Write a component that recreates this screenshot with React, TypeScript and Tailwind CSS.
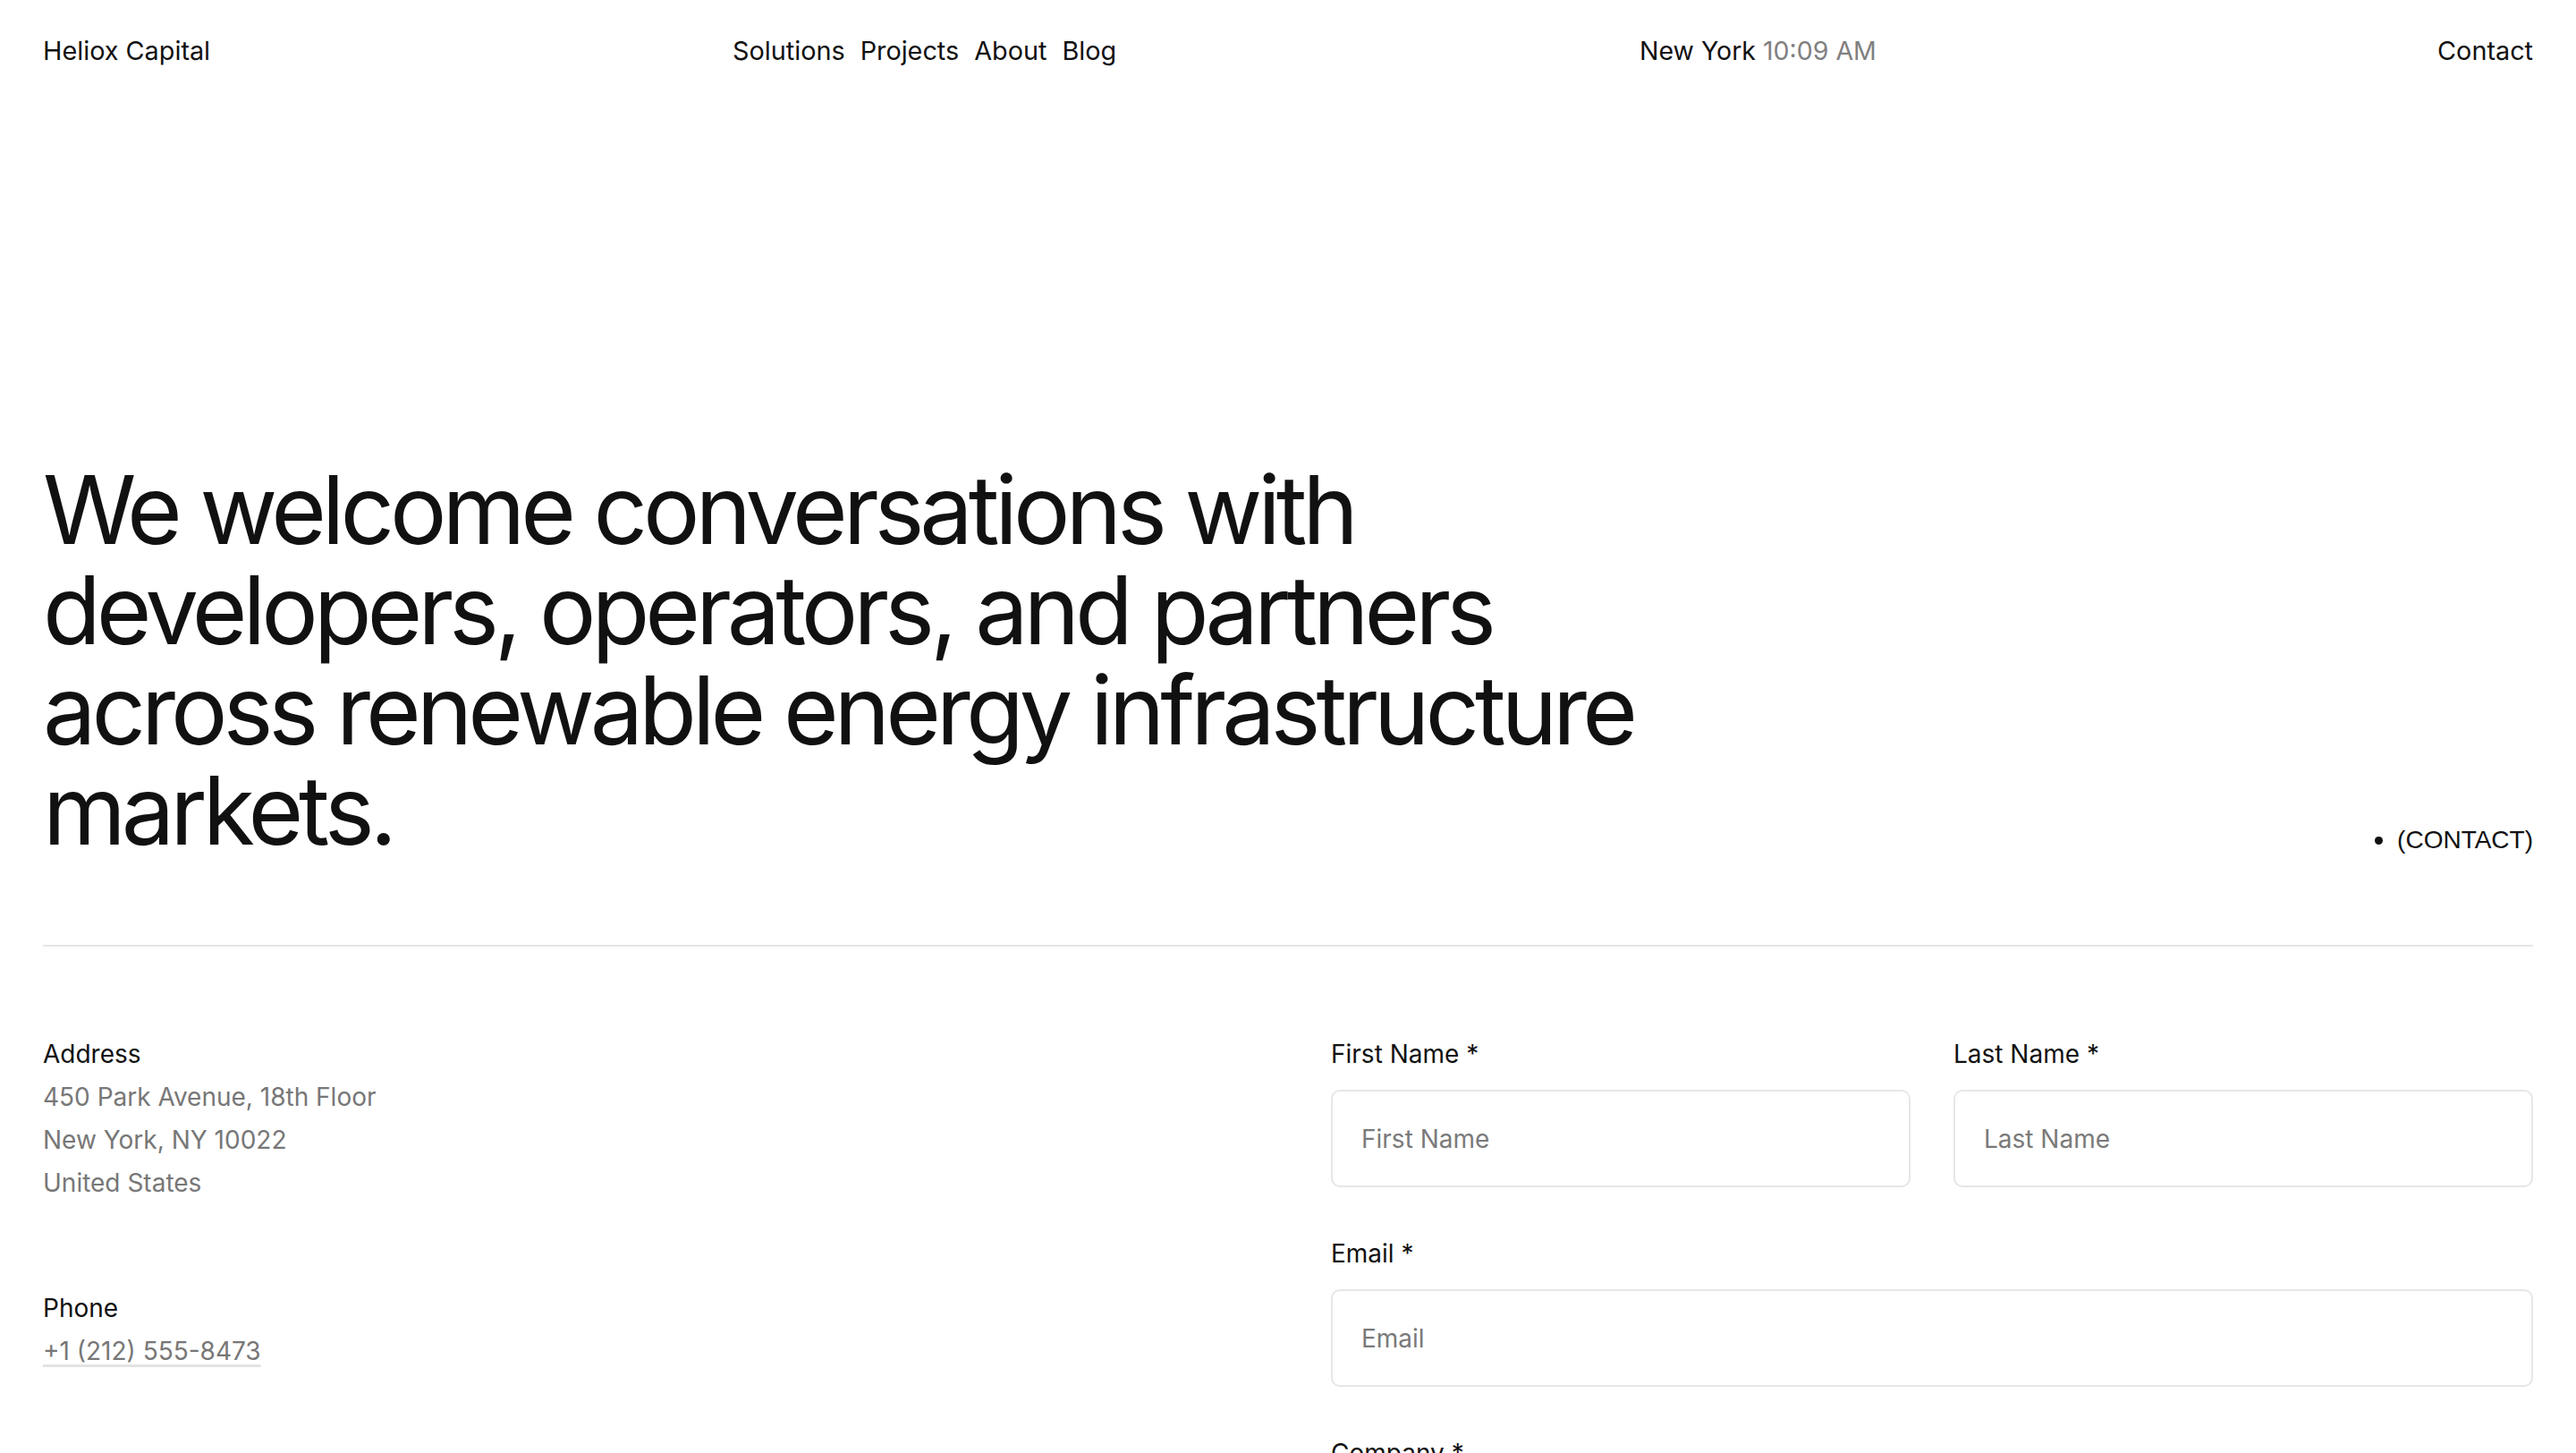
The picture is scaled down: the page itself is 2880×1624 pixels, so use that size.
import { useState } from 'react'

const navLinks = ['Solutions', 'Projects', 'About', 'Blog']

function Field({ label, placeholder, type = 'text' }: { label: string; placeholder: string; type?: string }) {
  const [value, setValue] = useState('')
  return (
    <label className="flex flex-col gap-4">
      <span className="text-[28px] leading-[48px] text-[#111]">{label}</span>
      <input
        type={type}
        value={value}
        onChange={(e) => setValue(e.target.value)}
        placeholder={placeholder}
        className="h-[109px] w-full rounded-[10px] border-2 border-[#e6e6e6] bg-white px-8 text-[28px] text-[#111] placeholder-[#7a7a7a] outline-none focus:border-[#bdbdbd]"
      />
    </label>
  )
}

export default function App() {
  return (
    <div className="min-h-screen bg-white px-12 text-[#111] font-['Inter',sans-serif] antialiased">
      {/* Header */}
      <header className="grid h-[114px] grid-cols-[771px_1014px_1fr] items-center text-[28.8px]">
        <a href="#" className="w-fit">Heliox Capital</a>
        <nav className="flex items-center gap-[17px]">
          {navLinks.map((link) => (
            <a key={link} href="#" className="hover:opacity-60">
              {link}
            </a>
          ))}
        </nav>
        <div className="flex items-center justify-between">
          <span className="text-[28.5px]">
            New York <span className="text-[#808080]">10:09 AM</span>
          </span>
          <a href="#" className="hover:opacity-60">Contact</a>
        </div>
      </header>

      {/* Hero */}
      <section className="flex items-end justify-between pt-[400px] pb-[94px] border-b-2 border-[#e6e6e6]">
        <h1 className="max-w-[1900px] text-[106px] leading-[112px] tracking-[-0.048em] text-[#111]">
          We welcome conversations with developers, operators, and partners across renewable energy
          infrastructure markets.
        </h1>
        <div className="flex items-center gap-4 pb-[2px] font-['Liberation_Sans',Arial,sans-serif] text-[28px] text-[#111]">
          <span className="h-[9px] w-[9px] rounded-full bg-[#111]" />
          <span>(CONTACT)</span>
        </div>
      </section>

      {/* Contact details + form */}
      <section className="grid grid-cols-2 gap-24 pt-[96px] pb-32">
        <div className="flex flex-col gap-[92px] text-[28px] leading-[48px]">
          <div>
            <div className="text-[#111]">Address</div>
            <div className="text-[#777]">450 Park Avenue, 18th Floor</div>
            <div className="text-[#777]">New York, NY 10022</div>
            <div className="text-[#777]">United States</div>
          </div>
          <div>
            <div className="text-[#111]">Phone</div>
            <a
              href="#"
              className="text-[#777] underline decoration-[#e3e3e3] decoration-[3px] underline-offset-[5px]"
            >
              +1 (212) 555-8473
            </a>
          </div>
        </div>

        <form className="flex flex-col gap-[50px]" onSubmit={(e) => e.preventDefault()}>
          <div className="grid grid-cols-2 gap-12">
            <Field label="First Name *" placeholder="First Name" />
            <Field label="Last Name *" placeholder="Last Name" />
          </div>
          <Field label="Email *" placeholder="Email" type="email" />
          <Field label="Company *" placeholder="Company" />
          <Field label="Message *" placeholder="Message" />
        </form>
      </section>
    </div>
  )
}
